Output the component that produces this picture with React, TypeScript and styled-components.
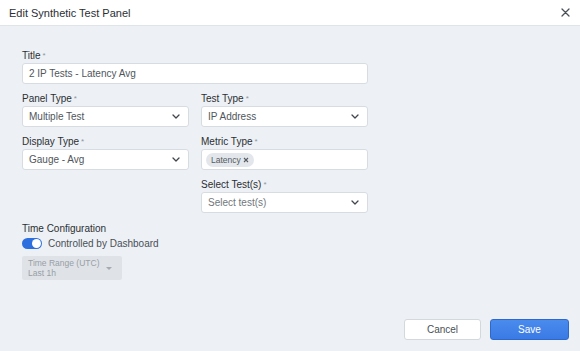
import React from "react";
import styled, { createGlobalStyle } from "styled-components";

const colors = {
    pageBg: "#edf1f5",
    white: "#ffffff",
    border: "#d6dce2",
    text: "#2b2f33",
    field: "#50565c",
    muted: "#8f959b",
    blue: "#2e6fe0",
};

const GlobalStyle = createGlobalStyle`
    html, body {
        margin: 0;
        padding: 0;
        background: ${colors.pageBg};
        font-family: "Liberation Sans", Arial, sans-serif;
    }
`;

const Page = styled.div`
    width: 580px;
    height: 351px;
    display: flex;
    flex-direction: column;
    background: ${colors.pageBg};
`;

const Header = styled.div`
    height: 25px;
    display: flex;
    align-items: center;
    justify-content: space-between;
    padding: 0 10px 0 9px;
    background: ${colors.white};
    border-bottom: 1px solid #dfe4e9;
`;

const HeaderTitle = styled.h1`
    margin: 0;
    font-size: 11px;
    font-weight: 400;
    color: ${colors.text};
`;

const CloseButton = styled.button`
    border: none;
    background: none;
    padding: 0;
    display: flex;
`;

const Body = styled.div`
    flex: 1;
    padding: 23px 22px 0;
`;

const FormGrid = styled.div`
    display: grid;
    grid-template-columns: 167px 167px;
    column-gap: 12px;
    row-gap: 8px;
`;

const Field = styled.div<{ $wide?: boolean; $col?: number }>`
    display: flex;
    flex-direction: column;
    grid-column: ${(p) => (p.$wide ? "1 / span 2" : p.$col ? `${p.$col}` : "auto")};
`;

const Label = styled.label`
    font-size: 10px;
    line-height: 13px;
    color: ${colors.text};
    margin-bottom: 1px;
`;

const Star = styled.span`
    color: ${colors.muted};
    font-size: 8px;
    vertical-align: top;
    margin-left: 2px;
`;

const Box = styled.div<{ $placeholder?: boolean }>`
    height: 21px;
    box-sizing: border-box;
    display: flex;
    align-items: center;
    justify-content: space-between;
    padding: 0 8px 0 6px;
    background: ${colors.white};
    border: 1px solid ${colors.border};
    border-radius: 3px;
    font-size: 10px;
    color: ${(p) => (p.$placeholder ? "#71777d" : colors.field)};
`;

const Tag = styled.span`
    display: inline-flex;
    align-items: center;
    gap: 2px;
    height: 14px;
    padding: 0 5px;
    margin-left: -2px;
    border-radius: 7px;
    background: #e3e7ec;
    font-size: 8.5px;
    color: #555b61;
`;

const Section = styled.div`
    margin-top: 9px;
    display: flex;
    flex-direction: column;
    align-items: flex-start;
`;

const ToggleRow = styled.div`
    display: flex;
    align-items: center;
    gap: 6px;
    margin-top: 2px;
    font-size: 10px;
    color: #4a4f55;
`;

const Toggle = styled.span`
    width: 20px;
    height: 11px;
    border-radius: 6px;
    background: ${colors.blue};
    display: flex;
    align-items: center;
    justify-content: flex-end;
    padding: 0 1px;
    box-sizing: border-box;

    &::after {
        content: "";
        width: 9px;
        height: 9px;
        border-radius: 50%;
        background: ${colors.white};
    }
`;

const RangeBox = styled.div`
    margin-top: 7px;
    width: 100px;
    height: 24px;
    box-sizing: border-box;
    display: flex;
    align-items: center;
    justify-content: space-between;
    padding: 0 10px 0 6px;
    background: #dfe3e8;
    border-radius: 2px;
    font-size: 8.5px;
    line-height: 10px;
    color: #989ea4;
`;

const Caret = styled.span`
    width: 0;
    height: 0;
    border-left: 3px solid transparent;
    border-right: 3px solid transparent;
    border-top: 3px solid #a4aab0;
`;

const Footer = styled.div`
    display: flex;
    justify-content: flex-end;
    gap: 9px;
    padding: 0 11px 11px 0;
`;

const Button = styled.button<{ $primary?: boolean }>`
    height: 21px;
    width: ${(p) => (p.$primary ? "79px" : "77px")};
    border-radius: 3px;
    font-family: inherit;
    font-size: 10px;
    cursor: pointer;
    border: 1px solid ${(p) => (p.$primary ? "#2e68cc" : "#d3d8dd")};
    background: ${(p) => (p.$primary ? "linear-gradient(#4a8bee, #3a7ae4)" : colors.white)};
    color: ${(p) => (p.$primary ? colors.white : "#4a4f55")};
`;

function Chevron() {
    return (
        <svg width="8" height="5" viewBox="0 0 8 5" fill="none">
            <path d="M1 1l3 3 3-3" stroke="#40464c" strokeWidth="1.3" strokeLinecap="round" strokeLinejoin="round" />
        </svg>
    );
}

function Select({ value, placeholder }: { value: string; placeholder?: boolean }) {
    return (
        <Box $placeholder={placeholder}>
            <span>{value}</span>
            <Chevron />
        </Box>
    );
}

export default function App() {
    return (
        <Page>
            <GlobalStyle />
            <Header>
                <HeaderTitle>Edit Synthetic Test Panel</HeaderTitle>
                <CloseButton aria-label="Close">
                    <svg width="9" height="9" viewBox="0 0 9 9">
                        <path d="M1 1l7 7M8 1l-7 7" stroke="#4a5056" strokeWidth="1.3" strokeLinecap="round" />
                    </svg>
                </CloseButton>
            </Header>
            <Body>
                <FormGrid>
                    <Field $wide>
                        <Label>
                            Title<Star>*</Star>
                        </Label>
                        <Box>2 IP Tests - Latency Avg</Box>
                    </Field>
                    <Field>
                        <Label>
                            Panel Type<Star>*</Star>
                        </Label>
                        <Select value="Multiple Test" />
                    </Field>
                    <Field>
                        <Label>
                            Test Type<Star>*</Star>
                        </Label>
                        <Select value="IP Address" />
                    </Field>
                    <Field>
                        <Label>
                            Display Type<Star>*</Star>
                        </Label>
                        <Select value="Gauge - Avg" />
                    </Field>
                    <Field>
                        <Label>
                            Metric Type<Star>*</Star>
                        </Label>
                        <Box>
                            <Tag>
                                Latency
                                <svg width="6" height="6" viewBox="0 0 6 6">
                                    <path d="M1 1l4 4M5 1l-4 4" stroke="#555b61" strokeWidth="1.1" />
                                </svg>
                            </Tag>
                        </Box>
                    </Field>
                    <Field $col={2}>
                        <Label>
                            Select Test(s)<Star>*</Star>
                        </Label>
                        <Select value="Select test(s)" placeholder />
                    </Field>
                </FormGrid>
                <Section>
                    <Label>Time Configuration</Label>
                    <ToggleRow>
                        <Toggle />
                        Controlled by Dashboard
                    </ToggleRow>
                    <RangeBox>
                        <span>
                            Time Range (UTC)
                            <br />
                            Last 1h
                        </span>
                        <Caret />
                    </RangeBox>
                </Section>
            </Body>
            <Footer>
                <Button>Cancel</Button>
                <Button $primary>Save</Button>
            </Footer>
        </Page>
    );
}
